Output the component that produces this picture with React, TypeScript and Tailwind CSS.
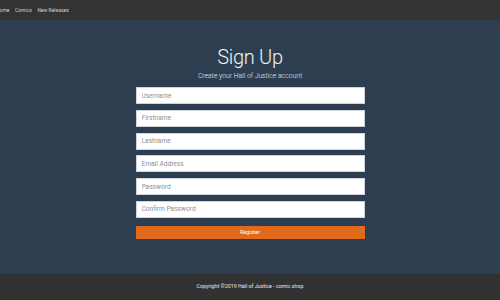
const fields = ['Username', 'Firstname', 'Lastname', 'Email Address', 'Password', 'Confirm Password'];

const App = () => {
  return (
    <div className="flex h-[300px] w-[500px] flex-col overflow-hidden bg-[#2c3e50] font-['Roboto',sans-serif]">
      {/* Navegación */}
      <nav className="flex h-[20px] shrink-0 items-center bg-[#333333]">
        <ul className="ml-[-4px] flex gap-[5.5px] text-[5px] leading-[8px] text-[#cfcfcf]">
          <li>Home</li>
          <li>Comics</li>
          <li>New Releases</li>
        </ul>
      </nav>

      {/* Formulario */}
      <main className="flex flex-1 flex-col items-center pt-[25px]">
        <h1 className="text-[20px] font-light leading-[24px] tracking-[-0.3px] text-[#f2f2f2]">Sign Up</h1>
        <p className="mt-[2px] text-[6.8px] font-light leading-[10px] text-[#ececec]">
          Create your Hall of Justice account
        </p>
        <form className="mt-[6px] flex w-[229px] flex-col gap-[5.75px]">
          {fields.map((f) => (
            <input
              key={f}
              placeholder={f}
              type={f.includes('Password') ? 'password' : 'text'}
              className="h-[17px] w-full border border-[#cfd4d8] bg-white px-[5px] text-[6.6px] text-[#333] outline-none placeholder:text-[#8f8f8f]"
            />
          ))}
          <button type="button" className="mt-[2.5px] h-[13px] w-full bg-[#e0691b] text-[5.5px] text-white">
            Register
          </button>
        </form>
      </main>

      {/* Pie de página */}
      <footer className="flex h-[26px] shrink-0 items-center justify-center bg-[#333232] text-[5.3px] text-[#e8e8e8]">
        Copyright ©2019 Hall of Justice - comic shop
      </footer>
    </div>
  );
};

export default App;
